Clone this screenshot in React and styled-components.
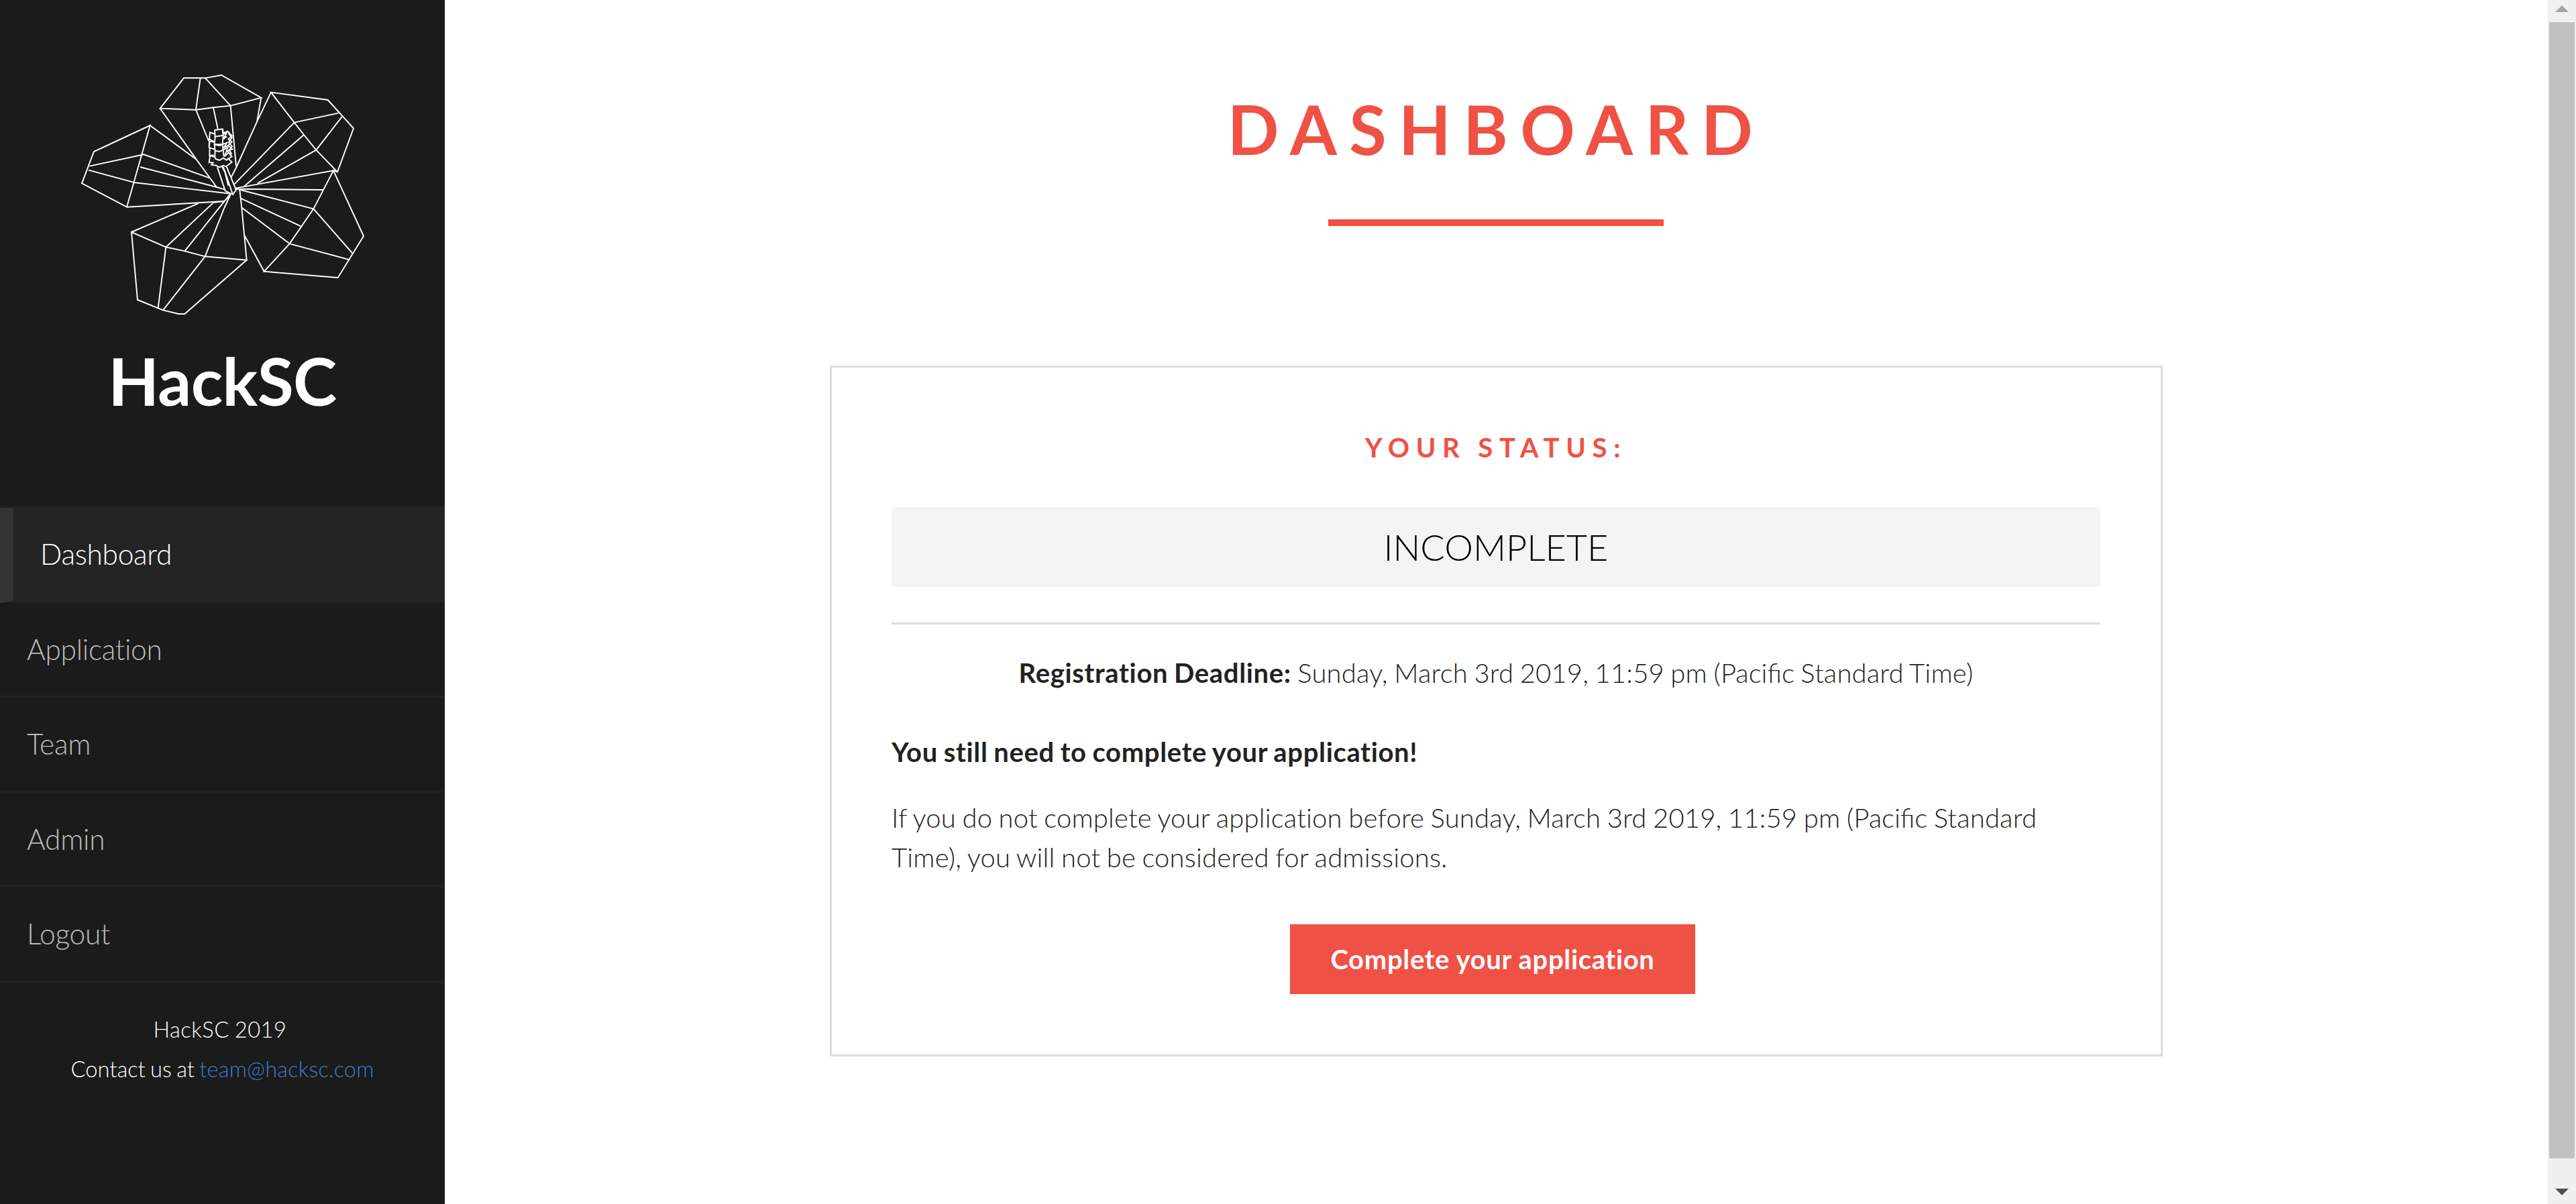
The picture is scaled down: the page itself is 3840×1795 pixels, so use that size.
import React from 'react';
import styled, { createGlobalStyle } from 'styled-components';

const accent = '#f05145';

const GlobalStyle = createGlobalStyle`
  * { box-sizing: border-box; }
  html, body { margin: 0; padding: 0; background: #fff; }
  body {
    overflow: hidden;
    font-family: Lato, 'Open Sans', sans-serif;
    font-weight: 300;
    font-size: 40px;
    line-height: 58.5px;
    color: #222;
    font-variant-ligatures: none;
    word-spacing: -1.6px;
  }
`;

const Page = styled.div`
  display: flex;
  height: 1795px;
`;

const Sidebar = styled.aside`
  display: flex;
  flex-direction: column;
  flex: none;
  width: 663px;
  background: #1b1b1b;
  color: #fff;
`;

const Brand = styled.div`
  display: flex;
  flex-direction: column;
  align-items: center;
  height: 754px;
  padding-top: 100px;
`;

const Logo = styled.svg`
  display: block;
  width: 440px;
  height: 380px;
  fill: none;
  stroke: #fff;
  stroke-width: 5.8;
`;

const BrandName = styled.h1`
  margin: 27px 0 0;
  font-size: 98.5px;
  line-height: 120px;
  font-weight: 700;
  letter-spacing: -0.6px;
`;

const Nav = styled.nav`
  display: flex;
  flex-direction: column;
  border-top: 3px solid #212121;
`;

const NavItem = styled.a`
  display: flex;
  align-items: center;
  height: 141.6px;
  padding-left: 40px;
  border-bottom: 3px solid #212121;
  border-left: ${(p) => (p.$active ? '20px solid #333' : '0')};
  background: ${(p) => (p.$active ? '#242424' : 'transparent')};
  color: ${(p) => (p.$active ? '#fff' : '#bbb')};
  font-size: 42.5px;
  letter-spacing: -0.3px;
`;

const Footer = styled.footer`
  margin-top: 40px;
  text-align: center;
  font-size: 32.7px;
  line-height: 59px;
`;

const FooterLine = styled.div`
  padding-right: ${(p) => (p.$wide ? '7px' : '0')};
  letter-spacing: ${(p) => (p.$wide ? '0.5px' : '0')};
`;

const MailLink = styled.a`
  color: #3a7bc8;
  letter-spacing: 0.1px;
`;

const Main = styled.main`
  display: flex;
  flex-direction: column;
  align-items: center;
  flex: 1;
  padding-top: 132px;
`;

const Title = styled.h2`
  margin: 0;
  color: ${accent};
  font-size: 101px;
  line-height: 120px;
  font-weight: 700;
  letter-spacing: 18.4px;
`;

const TitleBar = styled.div`
  width: 500px;
  height: 10px;
  margin: 75px 1px 0 0;
  background: ${accent};
`;

const Card = styled.section`
  display: flex;
  flex-direction: column;
  width: 1987px;
  height: 1030px;
  margin-top: 208px;
  padding: 95px 90px 0 89px;
  border: 3px solid #ddd;
`;

const CardHeading = styled.h3`
  margin: 0;
  color: ${accent};
  font-size: 40px;
  line-height: 48px;
  font-weight: 700;
  letter-spacing: 9.7px;
  text-align: center;
`;

const Status = styled.div`
  height: 119px;
  margin-top: 65px;
  background: #f4f4f4;
  color: #000;
  font-size: 54px;
  line-height: 119px;
  text-align: center;
`;

const Divider = styled.div`
  height: 3px;
  margin-top: 53px;
  background: #ddd;
`;

const Deadline = styled.p`
  margin: 43px 0 0;
  letter-spacing: 0.18px;
  text-align: center;
`;

const Strong = styled.strong`
  font-weight: 700;
  letter-spacing: 0.66px;
`;

const Notice = styled.p`
  margin: 59.5px 0 0;
`;

const Details = styled.p`
  margin: 39.5px 0 0;
  letter-spacing: 0.18px;
`;

const Ligated = styled.span`
  font-variant-ligatures: normal;
  letter-spacing: 0;
`;

const Button = styled.button`
  align-self: center;
  width: 604px;
  height: 104px;
  margin: 71px 10px 0 0;
  padding: 0;
  border: 0;
  background: ${accent};
  color: #fff;
  font: inherit;
  font-weight: 700;
`;

const Scrollbar = styled.div`
  display: flex;
  flex-direction: column;
  align-items: center;
  justify-content: space-between;
  flex: none;
  width: 42px;
  padding: 8px 0 13px;
  background: #f0f0f0;
`;

const Thumb = styled.div`
  width: 38px;
  height: 1694px;
  margin-top: 15px;
  margin-bottom: auto;
  background: #c1c1c1;
`;

const Arrow = styled.div`
  width: 0;
  height: 0;
  border: 10px solid transparent;
  border-top: ${(p) => (p.$up ? '0' : '10px solid #505050')};
  border-bottom: ${(p) => (p.$up ? '10px solid #a3a3a3' : '0')};
`;

const petals = [
  'M370,291L119,408L65,550L266,656Z',
  'M370,291L577,443M100,473L342,421L636,526M95,491L303,547L730,596M326,477L668,567L702,577M266,656L702,630',
  'M415,215L521,79H617L689,66L867,167L730,203L653,211L575,221Z',
  'M595,80L575,221L632,360M617,79L730,203L755,473M653,211L673,306M415,215L577,443L668,567M867,167L848,275',
  'M911,143L1165,177L1280,304L1208,499L1113,401L1058,333L1015,278Z',
  'M911,143L848,275L755,480L733,522M1015,278L1212,236M1113,401L1228,252M1015,278L747,554M1058,333L787,567M1113,401L850,550M1208,499L1190,493L752,572',
  'M1190,493L1325,786L1210,972L880,944L994,820L1101,664Z',
  'M1101,664L1278,866M994,820L1263,892M750,575L1142,579M762,576L1101,664M775,617L1045,742M778,657L994,820M771,580L780,660L802,893M880,944L793,784',
  'M287,768L314,1071L428,1117L498,1134H525L802,893L616,877L525,853L441,835Z',
  'M287,768L585,640M441,835L655,635L702,630L730,600M525,853L725,602M616,877L702,660L730,600M441,835L406,1107M616,877L430,1115',
];

const stamen = [
  'M671,478L706,583L740,600L755,580L712,475M697,476L706,500L740,600M690,472L705,500L720,560',
  'M659,312L694,307L697,336L661,341Z',
  'M661,330L638,322L635,352L661,366L632,362M661,341L658,376L694,376L697,336',
  'M697,332L716,318L698,352L714,340M720,326L736,345L722,368L737,385L724,400L735,420',
  'M694,307L698,325L718,317L736,338L720,352L736,365L720,380L738,397L715,405L736,430L720,440L736,455L712,473',
  'M635,355L634,390L658,398M634,388L637,366M658,376L661,404L680,408L697,401L694,376L714,368L700,390L720,380M658,376L680,382L694,376',
  'M637,392L636,426L660,432L661,404M697,401L718,388L703,430L722,412L735,430M636,426L655,424',
  'M638,428L634,457L652,458L645,467L665,470L680,478L697,470L712,475M660,432L662,440L680,447L698,437L712,446L722,436M697,401L700,430',
];

const navItems = ['Dashboard', 'Application', 'Team', 'Admin', 'Logout'];

export default function App() {
  return (
    <Page>
      <GlobalStyle />
      <Sidebar>
        <Brand>
          <Logo viewBox="35 30 1320 1140">
            {petals.map((d) => <path key={d} d={d} />)}
            {stamen.map((d) => <path key={d} d={d} />)}
          </Logo>
          <BrandName>HackSC</BrandName>
        </Brand>
        <Nav>
          {navItems.map((item, i) => (
            <NavItem key={item} $active={i === 0}>{item}</NavItem>
          ))}
        </Nav>
        <Footer>
          <FooterLine $wide>HackSC 2019</FooterLine>
          <FooterLine>Contact us at <MailLink>team@hacksc.com</MailLink></FooterLine>
        </Footer>
      </Sidebar>
      <Main>
        <Title>DASHBOARD</Title>
        <TitleBar />
        <Card>
          <CardHeading>YOUR STATUS:</CardHeading>
          <Status>INCOMPLETE</Status>
          <Divider />
          <Deadline>
            <Strong>Registration Deadline:</Strong> Sunday, March 3rd 2019, 11:59 pm (<Ligated>Pacific</Ligated> Standard Time)
          </Deadline>
          <Notice><Strong>You still need to complete your application!</Strong></Notice>
          <Details>
            If you do not complete your application before Sunday, March 3rd 2019, 11:59 pm (<Ligated>Pacific</Ligated> Standard Time), you will not be considered for admissions.
          </Details>
          <Button><Strong>Complete your application</Strong></Button>
        </Card>
      </Main>
      <Scrollbar>
        <Arrow $up />
        <Thumb />
        <Arrow />
      </Scrollbar>
    </Page>
  );
}
